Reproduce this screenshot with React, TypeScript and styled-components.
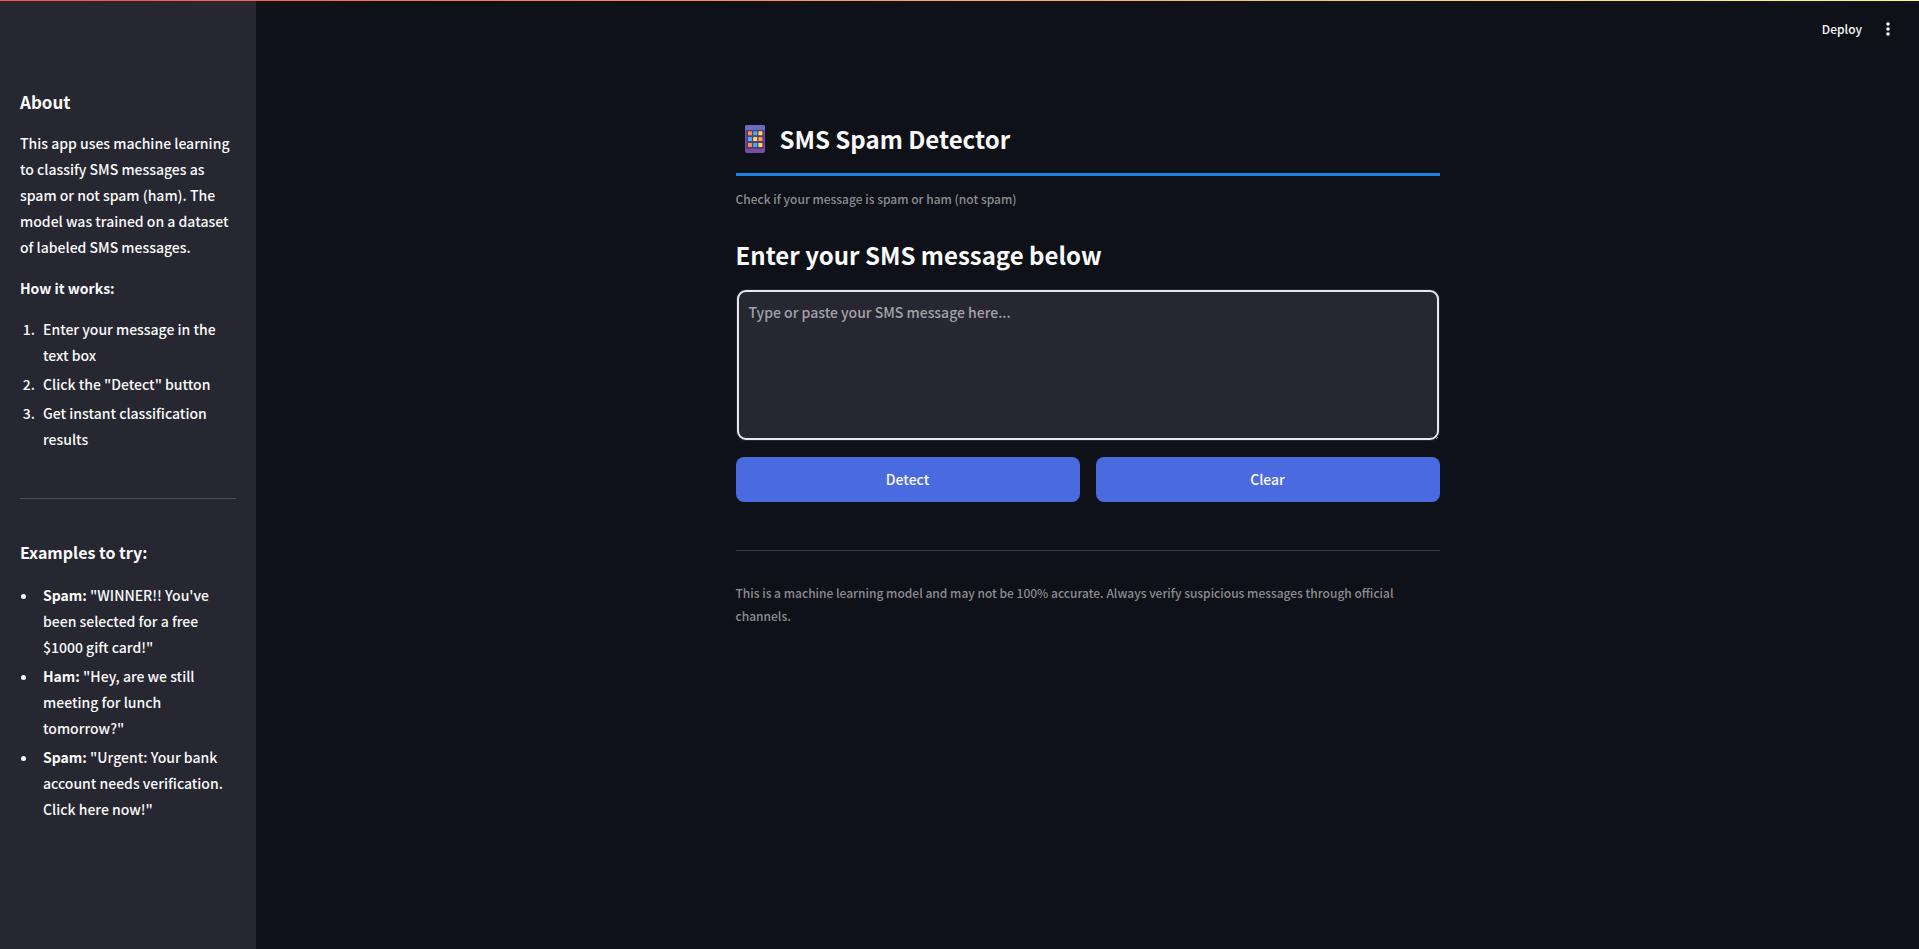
import React, { useState } from "react";
import styled, { createGlobalStyle } from "styled-components";

const GlobalStyle = createGlobalStyle`
  *, *::before, *::after { box-sizing: border-box; }
  body {
    margin: 0;
    background: #0e1117;
    color: #fafafa;
    font-family: "Noto Sans CJK SC", "Noto Sans", sans-serif;
    font-size: 14px;
    font-weight: 500;
    line-height: 26px;
  }
`;

const Page = styled.div`
  display: flex;
  flex-direction: column;
  min-height: 100vh;
`;

const Decoration = styled.div`
  height: 1px;
  background: linear-gradient(90deg, #ff4b4b, #fffd80);
`;

const Body = styled.div`
  display: flex;
  flex: 1;
`;

const Sidebar = styled.aside`
  flex: 0 0 256px;
  padding: 88px 20px 96px;
  background: #262730;
`;

const SidebarTitle = styled.h3<{ $size: number; $gap: number }>`
  margin: 0 0 ${(p) => p.$gap}px;
  font-size: ${(p) => p.$size}px;
  line-height: 26px;
  font-weight: 700;
`;

const Paragraph = styled.p`
  margin: 0 0 15px;
`;

const listStyle = `
  margin: 0;
  padding-left: 18px;
`;

const Steps = styled.ol`
  ${listStyle}
`;

const Examples = styled.ul`
  ${listStyle}
`;

const Item = styled.li`
  margin-bottom: 3px;
  padding-left: 5px;
`;

const Divider = styled.hr<{ $gap: number; $color: string }>`
  height: 1px;
  margin: ${(p) => p.$gap}px 0 0;
  border: 0;
  background: ${(p) => p.$color};
`;

const SecondSection = styled.section`
  padding-top: 40px;
`;

const Main = styled.main`
  flex: 1;
  min-width: 0;
`;

const Toolbar = styled.header`
  display: flex;
  justify-content: flex-end;
  align-items: center;
  gap: 15px;
  height: 56px;
  padding: 0 20px;
`;

const ToolbarButton = styled.button`
  display: flex;
  align-items: center;
  padding: 0;
  border: 0;
  background: none;
  color: inherit;
  font: inherit;
  font-size: 12px;
  line-height: 24px;
  cursor: pointer;
`;

const Content = styled.div`
  width: 100%;
  max-width: 736px;
  margin: 0 auto;
  padding: 64px 16px 96px;
`;

const TitleBar = styled.div`
  display: flex;
  align-items: center;
  gap: 15px;
  padding: 0 9px 16px;
  border-bottom: 3px solid #1c83e1;
`;

const Heading = styled.h2`
  margin: 0;
  font-size: 24px;
  line-height: 36px;
  font-weight: 700;
`;

const FormHeading = styled(Heading)`
  margin: 27px 0 16px;
`;

const Caption = styled.p<{ $gap: number }>`
  margin: ${(p) => p.$gap}px 0 0;
  color: #8b8c8f;
  font-size: 12px;
  line-height: 23px;
`;

const MessageBox = styled.textarea`
  display: block;
  width: 100%;
  height: 152px;
  padding: 9px 12px;
  border: 1px solid #262730;
  border-radius: 10px;
  outline: 2px solid #e6e8ed;
  outline-offset: -3px;
  background: #262730;
  color: inherit;
  font: inherit;
  resize: vertical;

  &::placeholder { color: #a3a3a8; opacity: 1; }
`;

const Actions = styled.div`
  display: grid;
  grid-template-columns: 1fr 1fr;
  gap: 16px;
  margin-top: 16px;
`;

const ActionButton = styled.button`
  height: 45px;
  padding: 0 0 2px;
  border: 0;
  border-radius: 8px;
  background: #4a6bdf;
  color: #fafafa;
  font: inherit;
  cursor: pointer;
`;

const keyColors = [
  ["#ff8a50", "#35b8f1", "#ffd94d"],
  ["#35b8f1", "#ffe04d", "#ff9a50"],
  ["#ff8a50", "#35b8f1", "#ffe04d"],
];

const PhoneIcon = () => (
  <svg width="20" height="28" viewBox="0 0 20 28" aria-hidden="true">
    <rect width="20" height="28" rx="2" fill="#7350a8" />
    <path d="M2 0h16a2 2 0 0 1 2 2v3H0V2a2 2 0 0 1 2-2z" fill="#6a6cc0" />
    <rect x="1" y="5" width="18" height="19" fill="#5a3b78" />
    {keyColors.map((row, r) =>
      row.map((color, c) => (
        <rect key={`${r}${c}`} x={3 + c * 5.2} y={6.3 + r * 5.8} width="4" height="4" rx="0.6" fill={color} />
      ))
    )}
  </svg>
);

const MenuIcon = () => (
  <svg width="22" height="22" viewBox="0 0 22 22" fill="currentColor" aria-hidden="true">
    <circle cx="11" cy="6" r="1.8" />
    <circle cx="11" cy="11" r="1.8" />
    <circle cx="11" cy="16" r="1.8" />
  </svg>
);

const examples = [
  { kind: "Spam:", text: "\"WINNER!! You've been selected for a free $1000 gift card!\"" },
  { kind: "Ham:", text: "\"Hey, are we still meeting for lunch tomorrow?\"" },
  { kind: "Spam:", text: "\"Urgent: Your bank account needs verification. Click here now!\"" },
];

export default function App() {
  const [message, setMessage] = useState("");

  return (
    <>
      <GlobalStyle />
      <Page>
        <Decoration />
        <Body>
          <Sidebar>
            <section>
              <SidebarTitle $size={17} $gap={15}>
                About
              </SidebarTitle>
              <Paragraph>
                This app uses machine learning to classify SMS messages as spam or not spam (ham). The
                model was trained on a dataset of labeled SMS messages.
              </Paragraph>
              <Paragraph>
                <strong>How it works:</strong>
              </Paragraph>
              <Steps>
                <Item>Enter your message in the text box</Item>
                <Item>Click the "Detect" button</Item>
                <Item>Get instant classification results</Item>
              </Steps>
            </section>
            <Divider $gap={46} $color="#4c4d55" />
            <SecondSection>
              <SidebarTitle $size={16} $gap={17}>
                Examples to try:
              </SidebarTitle>
              <Examples>
                {examples.map((e) => (
                  <Item key={e.text}>
                    <strong>{e.kind}</strong> {e.text}
                  </Item>
                ))}
              </Examples>
            </SecondSection>
          </Sidebar>
          <Main>
            <Toolbar>
              <ToolbarButton type="button">Deploy</ToolbarButton>
              <ToolbarButton type="button" aria-label="Main menu">
                <MenuIcon />
              </ToolbarButton>
            </Toolbar>
            <Content>
              <TitleBar>
                <PhoneIcon />
                <Heading as="h1">SMS Spam Detector</Heading>
              </TitleBar>
              <Caption $gap={11}>Check if your message is spam or ham (not spam)</Caption>
              <FormHeading id="message-label">Enter your SMS message below</FormHeading>
              <MessageBox
                aria-labelledby="message-label"
                placeholder="Type or paste your SMS message here..."
                value={message}
                onChange={(e) => setMessage(e.target.value)}
              />
              <Actions>
                <ActionButton type="button">Detect</ActionButton>
                <ActionButton type="button" onClick={() => setMessage("")}>
                  Clear
                </ActionButton>
              </Actions>
              <Divider $gap={48} $color="#3c3e43" />
              <Caption $gap={30}>
                This is a machine learning model and may not be 100% accurate. Always verify suspicious
                messages through official channels.
              </Caption>
            </Content>
          </Main>
        </Body>
      </Page>
    </>
  );
}
